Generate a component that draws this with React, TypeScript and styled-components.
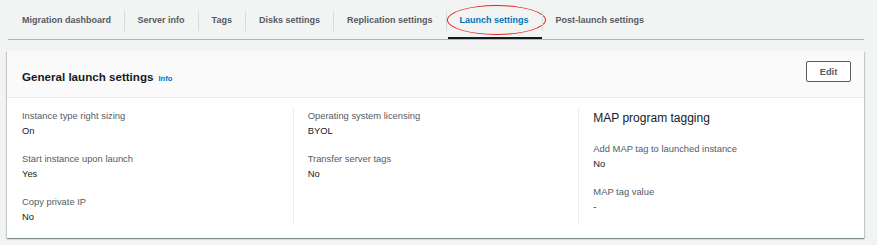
import * as React from 'react';
import styled, { createGlobalStyle } from 'styled-components';

const GlobalStyle = createGlobalStyle`
  html, body {
    margin: 0;
    padding: 0;
    background: #f2f3f3;
  }
  body {
    font-family: 'Liberation Sans', Arial, sans-serif;
    color: #16191f;
  }
`;

const Page = styled.div`
  width: 877px;
  height: 245px;
  padding: 0 13px 0 7px;
  box-sizing: border-box;
  overflow: hidden;
`;

const TabBar = styled.div`
  display: flex;
  height: 40px;
  margin-left: 1px;
  border-bottom: 1px solid #aab7b8;
  box-sizing: border-box;
`;

const Tab = styled.div<{ $active?: boolean; $first?: boolean }>`
  position: relative;
  display: flex;
  align-items: center;
  padding: ${(p) => (p.$first ? '0 13px 0 14px' : '0 13.5px')};
  font-size: 9px;
  font-weight: 700;
  color: ${(p) => (p.$active ? '#0073bb' : '#545b64')};
  white-space: nowrap;

  &::before {
    content: ${(p) => (p.$first ? 'none' : "''")};
    position: absolute;
    left: 0;
    top: 11px;
    height: 20px;
    border-left: 1px solid #d5dbdb;
  }

  &::after {
    content: ${(p) => (p.$active ? "''" : 'none')};
    position: absolute;
    left: 2px;
    right: 0;
    bottom: 0;
    height: 2px;
    background: #16191f;
  }
`;

const Highlight = styled.span`
  position: absolute;
  left: 1px;
  right: -4px;
  top: 5px;
  height: 30px;
  border: 1px solid #e0271f;
  border-radius: 50%;
  box-sizing: border-box;
  pointer-events: none;
`;

const Card = styled.section`
  margin-top: 11px;
  background: #fff;
  box-shadow: 0 1px 1px 0 rgba(0, 28, 36, 0.3), 1px 1px 1px 0 rgba(0, 28, 36, 0.15),
    -1px 1px 1px 0 rgba(0, 28, 36, 0.15);
`;

const CardHeader = styled.header`
  display: flex;
  justify-content: space-between;
  align-items: flex-start;
  height: 47px;
  padding: 10px 13px 0 15px;
  box-sizing: border-box;
  background: #fafafa;
  border-bottom: 1px solid #eaeded;
`;

const Title = styled.h2`
  margin: 8px 0 0;
  font-size: 11.6px;
  line-height: 16px;
  font-weight: 700;
  color: #16191f;
`;

const InfoLink = styled.span`
  margin-left: 5px;
  font-size: 7.6px;
  font-weight: 700;
  color: #0073bb;
`;

const Button = styled.button`
  width: 45px;
  height: 21px;
  padding: 0;
  border: 1px solid #545b64;
  border-radius: 2px;
  background: #fff;
  font-family: inherit;
  font-size: 9.3px;
  font-weight: 700;
  color: #545b64;
`;

const CardBody = styled.div`
  display: grid;
  grid-template-columns: repeat(3, 1fr);
  padding: 10px 0 13px;
`;

const Column = styled.div<{ $first?: boolean }>`
  padding: ${(p) => (p.$first ? '0 14px 0 15px' : '0 14px')};
  border-left: ${(p) => (p.$first ? 'none' : '1px solid #eaeded')};
`;

const GroupTitle = styled.h3`
  margin: 0 0 13px;
  font-size: 12px;
  line-height: 20px;
  font-weight: 400;
  color: #16191f;
`;

const Field = styled.div`
  margin-bottom: 12px;
  &:last-child {
    margin-bottom: 0;
  }
`;

const Label = styled.div`
  font-size: 9.4px;
  line-height: 15px;
  color: #545b64;
`;

const Value = styled.div`
  font-size: 9.4px;
  line-height: 16px;
  color: #16191f;
`;

const tabs = [
  'Migration dashboard',
  'Server info',
  'Tags',
  'Disks settings',
  'Replication settings',
  'Launch settings',
  'Post-launch settings',
];

type Item = { label: string; value: string };

const columns: { title?: string; items: Item[] }[] = [
  {
    items: [
      { label: 'Instance type right sizing', value: 'On' },
      { label: 'Start instance upon launch', value: 'Yes' },
      { label: 'Copy private IP', value: 'No' },
    ],
  },
  {
    items: [
      { label: 'Operating system licensing', value: 'BYOL' },
      { label: 'Transfer server tags', value: 'No' },
    ],
  },
  {
    title: 'MAP program tagging',
    items: [
      { label: 'Add MAP tag to launched instance', value: 'No' },
      { label: 'MAP tag value', value: '-' },
    ],
  },
];

export default function App() {
  const activeTab = 'Launch settings';

  return (
    <Page>
      <GlobalStyle />
      <TabBar>
        {tabs.map((t, i) => (
          <Tab key={t} $first={i === 0} $active={t === activeTab}>
            {t}
            {t === activeTab && <Highlight />}
          </Tab>
        ))}
      </TabBar>
      <Card>
        <CardHeader>
          <Title>
            General launch settings<InfoLink>Info</InfoLink>
          </Title>
          <Button>Edit</Button>
        </CardHeader>
        <CardBody>
          {columns.map((col, i) => (
            <Column key={i} $first={i === 0}>
              {col.title && <GroupTitle>{col.title}</GroupTitle>}
              {col.items.map((item) => (
                <Field key={item.label}>
                  <Label>{item.label}</Label>
                  <Value>{item.value}</Value>
                </Field>
              ))}
            </Column>
          ))}
        </CardBody>
      </Card>
    </Page>
  );
}
